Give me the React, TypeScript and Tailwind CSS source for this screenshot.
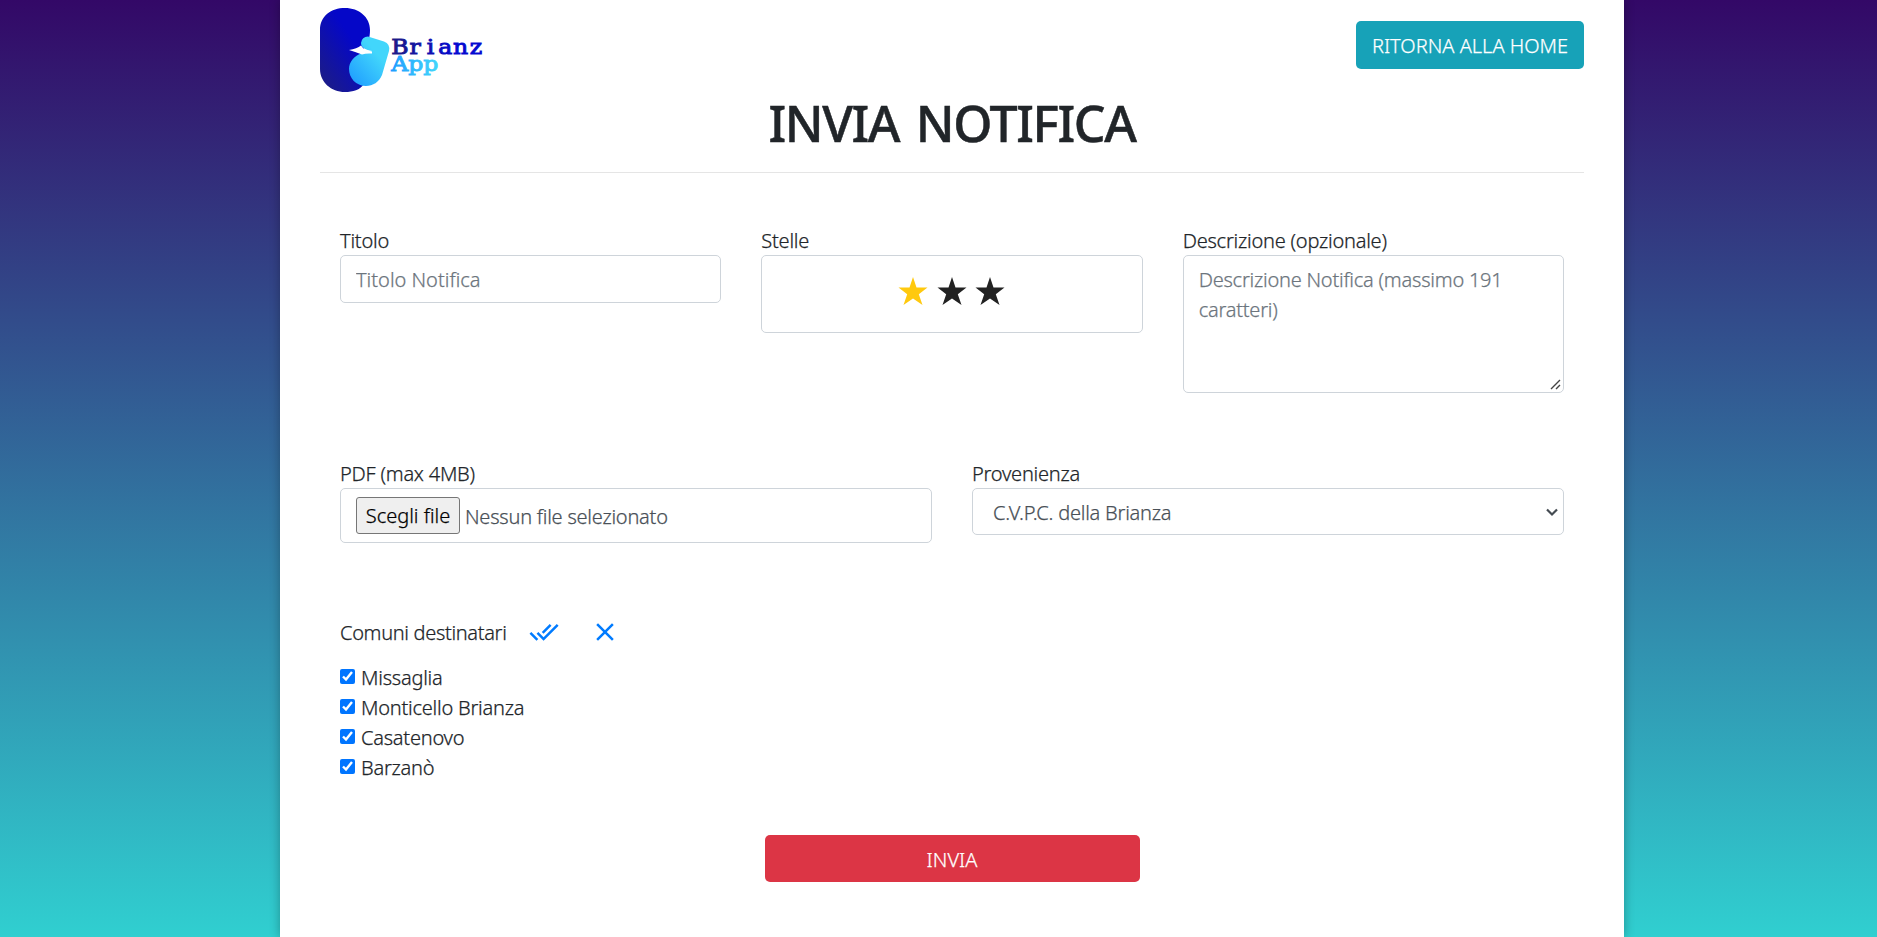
import { useState } from "react";

const comuni = ["Missaglia", "Monticello Brianza", "Casatenovo", "Barzanò"];
const field = "box-border w-full rounded-[5px] border border-[#ced4da] bg-white";

function Logo() {
  return (
    <svg width="164" height="94" viewBox="0 0 164 94" className="block">
      <defs>
        <linearGradient id="blue" x1="0" y1="1" x2="0.7" y2="0.2">
          <stop offset="0" stopColor="#1f1f7e" />
          <stop offset="0.85" stopColor="#0507c8" />
        </linearGradient>
        <linearGradient id="cyan" x1="0.1" y1="1" x2="0.7" y2="0.35">
          <stop offset="0" stopColor="#1e9cff" />
          <stop offset="1" stopColor="#42d6fb" />
        </linearGradient>
        <linearGradient id="word" x1="0" y1="0" x2="1" y2="0">
          <stop offset="0" stopColor="#1d1b84" />
          <stop offset="0.7" stopColor="#0408d0" />
        </linearGradient>
        <linearGradient id="app" x1="0" y1="0" x2="1" y2="0">
          <stop offset="0" stopColor="#1e9cff" />
          <stop offset="1" stopColor="#42d6fb" />
        </linearGradient>
      </defs>
      <path d="M0 25C0 11 11 3 25 3S50 12 50 25C50 33 48 38 44 43L44 79C40 85 33 87 25 87C11 87 0 77 0 64Z" fill="url(#blue)" />
      <path d="M48 31.500L64 36.500Q70.500 39 69 46L62 70C59 77 53 81 46 81C36 81 29 73 29 64C29 57 34 51 42 48L52 46C46 45 41 43 41 38Q42 31.500 48 31.500Z" fill="url(#cyan)" />
      <path d="M29 45Q37 43.500 41 40.500Q44 45.500 52 46.500V48.500Q46 48 42 49.500Q37 47.500 29 45Z" fill="#fff" />
      <g fontSize="20.500" strokeWidth="0.9" textAnchor="middle" fontFamily="DejaVu Serif, serif" transform="scale(1.150 1)">
        <text x="69.300 82.600 95.900 108.900 122.200 135.500" y="49" fill="url(#word)" stroke="url(#word)">Brianz</text>
        <text x="69.300 83.200 96.200" y="66.300" fill="url(#app)" stroke="url(#app)">App</text>
      </g>
    </svg>
  );
}

export default function App() {
  const [stars, setStars] = useState(1);
  const [selected, setSelected] = useState(comuni);
  return (
    <div className="flex h-[937px] justify-center overflow-hidden bg-linear-to-b/srgb from-[#330867] to-[#30cfd0] font-['Noto_Sans',sans-serif] text-[20px] leading-[30px] font-light tracking-[-0.230px] text-[#212529] [-webkit-text-stroke:0.25px]">
      <main className="mr-[-27px] h-full w-[1344px] bg-white px-[40px] shadow-[0_0_10px_rgba(0,0,0,0.3)]">
        <header className="flex h-[93px] items-start justify-between pt-[5px]">
          <Logo />
          <button className="mt-4 h-12 w-[228px] rounded-[5px] bg-[#17a2b8] pt-0.5 tracking-normal text-white">RITORNA ALLA HOME</button>
        </header>
        <h1 className="h-[79px] text-center text-[50px] leading-[60px] font-medium tracking-[-1.400px] [word-spacing:5px] [-webkit-text-stroke:0.5px]">INVIA NOTIFICA</h1>
        <hr className="border-black/10" />
        <div className="mt-[52px] grid h-[233px] grid-cols-3">
          <div className="px-5">
            <label className="block h-[30px] leading-[32px]">Titolo</label>
            <input className={`${field} h-12 px-[15px] tracking-normal placeholder:text-[#6c757d]`} placeholder="Titolo Notifica" />
          </div>
          <div className="px-5">
            <label className="block h-[30px] leading-[32px]">Stelle</label>
            <div className={`${field} flex h-[78px] justify-center pb-[5px]`}>
              {[1, 2, 3].map((n) => (
                <button key={n} onClick={() => setStars(n)} className="w-[38.500px]">
                  <svg viewBox="0 0 30 29" className={n <= stars ? "mx-auto w-[30px] text-[#ffc90e]" : "mx-auto w-[30px] text-[#222]"}>
                    <path fill="currentColor" d="M15 0L18.500 10.500H29.500L20.800 17.200L24.500 28L15 21.400L5.500 28L9.200 17.200L.5 10.500H11.500Z" />
                  </svg>
                </button>
              ))}
            </div>
          </div>
          <div className="px-5">
            <label className="block h-[30px] leading-[32px]">Descrizione (opzionale)</label>
            <div className="relative">
              <textarea className={`${field} block h-[138px] resize-none px-[15px] py-[9px] placeholder:text-[#6c757d]`} placeholder="Descrizione Notifica (massimo 191 caratteri)" />
              <svg className="absolute right-[3px] bottom-[3px]" width="11" height="11" viewBox="0 0 11 11" stroke="#444" strokeWidth="1.400"><path d="M1 10L10 1M6 10L10 6" /></svg>
            </div>
          </div>
        </div>
        <div className="grid h-[159px] grid-cols-2">
          <div className="px-5">
            <label className="block h-[30px] leading-[32px]">PDF (max 4MB)</label>
            <div className={`${field} flex h-[55px] items-start px-[15px] pt-2 text-[#495057]`}>
              <button className="h-[37px] w-[104px] rounded-[3px] border border-[#767676] bg-[#efefef] tracking-normal text-black">Scegli file</button>
              <span className="ml-[5px] pt-[5px]">Nessun file selezionato</span>
            </div>
          </div>
          <div className="px-5">
            <label className="block h-[30px] leading-[32px]">Provenienza</label>
            <div className="relative">
              <select className={`${field} block h-[47px] appearance-none px-[20px] pt-0.5 text-[#495057]`}>
                <option>C.V.P.C. della Brianza</option>
              </select>
              <svg className="pointer-events-none absolute top-[20px] right-[6px]" width="12" height="9" viewBox="0 0 12 9" fill="none" stroke="#444b52" strokeWidth="2.200"><path d="M1 1.500L6 6.500L11 1.500" /></svg>
            </div>
          </div>
        </div>
        <div className="px-5">
          <div className="flex h-[46px] items-start">
            <span className="w-[168.500px] pt-px tracking-[-0.330px] whitespace-nowrap">Comuni destinatari</span>
            <button aria-label="Seleziona tutti" onClick={() => setSelected(comuni)} className="ml-5">
              <svg width="30" height="30" viewBox="0 0 24 24" fill="#007bff"><path d="M18 7l-1.410-1.410-6.340 6.340 1.410 1.410L18 7zm4.240-1.410L11.660 16.170 7.480 12l-1.410 1.410L11.660 19l12-12-1.420-1.410zM.41 13.410L6 19l1.410-1.410L1.830 12 .41 13.410z" /></svg>
            </button>
            <button aria-label="Deseleziona tutti" onClick={() => setSelected([])} className="ml-[31px]">
              <svg width="30" height="30" viewBox="0 0 24 24" fill="#007bff"><path d="M19 6.410L17.590 5 12 10.590 6.410 5 5 6.410 10.590 12 5 17.590 6.410 19 12 13.410 17.590 19 19 17.590 13.410 12z" /></svg>
            </button>
          </div>
          {comuni.map((c) => (
            <label key={c} className="flex h-[30px]">
              <input type="checkbox" checked={selected.includes(c)} onChange={() => setSelected(selected.includes(c) ? selected.filter((x) => x !== c) : [...selected, c])} className="mt-[6px] mr-1.5 size-[15px] accent-[#0075ff]" />
              {c}
            </label>
          ))}
        </div>
        <button className="mx-auto mt-[52px] block h-[47px] w-[375px] rounded-[5px] bg-[#dc3545] pt-0.5 tracking-normal text-white">INVIA</button>
      </main>
    </div>
  );
}
